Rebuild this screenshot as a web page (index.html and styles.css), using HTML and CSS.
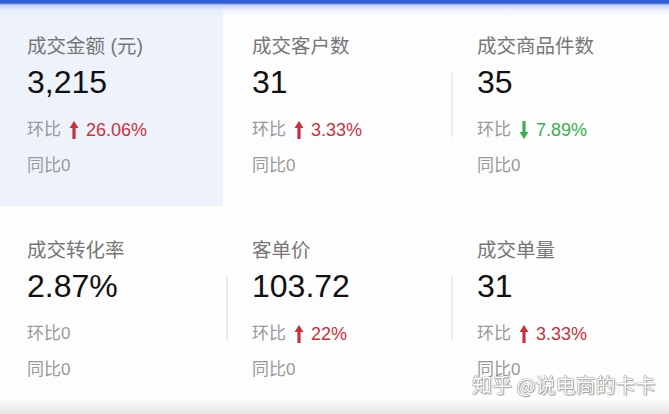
FILE: index.html
```html
<!DOCTYPE html>
<html lang="zh-CN">
<head>
    <meta charset="UTF-8">
    <meta name="viewport" content="width=device-width, initial-scale=1.0">
    <title>交易概况</title>
    <link rel="stylesheet" href="styles.css">
</head>
<body>
    <div class="top-bar"></div>

    <div class="stats">
        <!-- row 1 -->
        <div class="cell active">
            <div class="title">成交金额 (元)</div>
            <div class="value">3,215</div>
            <div class="line">环比
                <span class="up">
                    <svg class="arrow" viewBox="0 0 10 18"><path d="M5 0 L9.5 7 H6.6 V18 H3.4 V7 H0.5 Z"/></svg>
                    26.06%
                </span>
            </div>
            <div class="line last">同比0</div>
        </div>
        <div class="cell">
            <div class="title">成交客户数</div>
            <div class="value">31</div>
            <div class="line">环比
                <span class="up">
                    <svg class="arrow" viewBox="0 0 10 18"><path d="M5 0 L9.5 7 H6.6 V18 H3.4 V7 H0.5 Z"/></svg>
                    3.33%
                </span>
            </div>
            <div class="line last">同比0</div>
        </div>
        <div class="cell sep">
            <div class="title">成交商品件数</div>
            <div class="value">35</div>
            <div class="line">环比
                <span class="down">
                    <svg class="arrow" viewBox="0 0 10 18"><path d="M5 18 L9.5 11 H6.6 V0 H3.4 V11 H0.5 Z"/></svg>
                    7.89%
                </span>
            </div>
            <div class="line last">同比0</div>
        </div>

        <!-- row 2 -->
        <div class="cell">
            <div class="title">成交转化率</div>
            <div class="value">2.87%</div>
            <div class="line">环比0</div>
            <div class="line last">同比0</div>
        </div>
        <div class="cell sep">
            <div class="title">客单价</div>
            <div class="value">103.72</div>
            <div class="line">环比
                <span class="up">
                    <svg class="arrow" viewBox="0 0 10 18"><path d="M5 0 L9.5 7 H6.6 V18 H3.4 V7 H0.5 Z"/></svg>
                    22%
                </span>
            </div>
            <div class="line last">同比0</div>
        </div>
        <div class="cell sep">
            <div class="title">成交单量</div>
            <div class="value">31</div>
            <div class="line">环比
                <span class="up">
                    <svg class="arrow" viewBox="0 0 10 18"><path d="M5 0 L9.5 7 H6.6 V18 H3.4 V7 H0.5 Z"/></svg>
                    3.33%
                </span>
            </div>
            <div class="line last">同比0</div>
        </div>
    </div>

    <div class="bottom-bar"></div>

    <div class="watermark">知乎 @说电商的卡卡</div>
</body>
</html>
```

FILE: styles.css
```css
body {
    margin: 0;
    padding: 0;
    width: 669px;
    height: 414px;
    overflow: hidden;
    position: relative;
    background: #fdfdfe;
    font-family: "Liberation Sans", "Noto Sans CJK SC", sans-serif;
}

/* blue strip at the very top with a soft fade */
.top-bar {
    position: absolute;
    top: 0;
    left: 0;
    right: 0;
    height: 16px;
    background: linear-gradient(#2f5fd6 0, #2f5fd6 3px, #c3d1f3 5px, rgba(225, 232, 249, 0.6) 10px, rgba(255, 255, 255, 0) 16px);
    z-index: 2;
}

.stats {
    display: grid;
    grid-template-columns: 225px 225px 1fr;
    grid-template-rows: 204px 196px;
}

.cell {
    position: relative;
    padding: 34px 0 0 27px;
}

.cell.active {
    background: #eef2fb;
    margin-right: 2px;
    margin-bottom: -2px;
}

/* short divider line between cells */
.cell.sep::before {
    content: "";
    position: absolute;
    left: 1px;
    top: 73px;
    width: 2px;
    height: 64px;
    background: #ebebeb;
}

.title {
    font-size: 19.5px;
    line-height: 24px;
    color: #777;
}

.value {
    font-size: 32px;
    line-height: 38px;
    margin-top: 5px;
    color: #111;
}

.line {
    display: flex;
    align-items: center;
    font-size: 17px;
    line-height: 22px;
    color: #999;
    margin-top: 18px;
}

.line.last {
    margin-top: 14px;
}

.up, .down {
    display: flex;
    align-items: center;
    margin-left: 8px;
    font-size: 18px;
}

.up {
    color: #c9313b;
}

.down {
    color: #39b04c;
}

.arrow {
    width: 10px;
    height: 18px;
    margin-right: 7px;
    fill: currentColor;
}

.bottom-bar {
    height: 14px;
    background: linear-gradient(#fbfbfb, #e4e4e4);
}

.watermark {
    position: absolute;
    left: 472px;
    top: 373px;
    font-family: "Noto Sans CJK SC", sans-serif;
    font-size: 20px;
    line-height: 24px;
    color: #fff;
    text-shadow: 0 0 1px #777, 0 0 1px #777, 1px 1px 1px #aaa;
    z-index: 3;
}
```
